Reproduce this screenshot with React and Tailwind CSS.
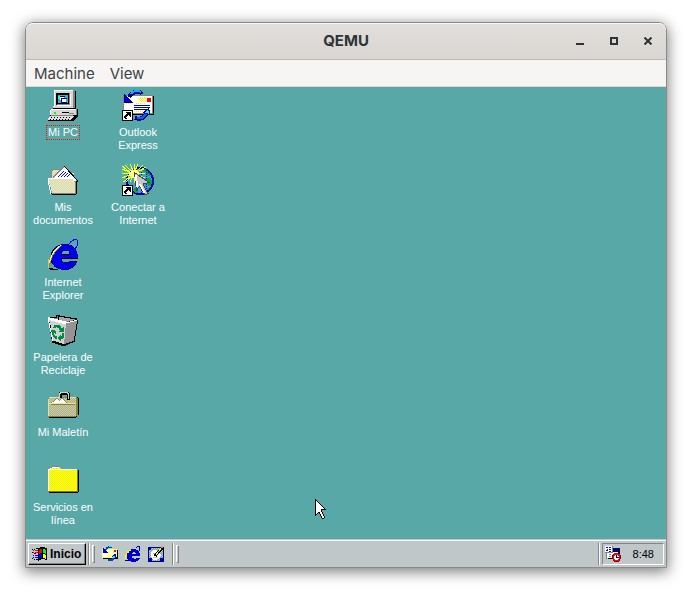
import { useState } from 'react';

const Icon = ({ size = 32, children }) => (
  <svg
    width={size}
    height={size}
    viewBox={size === 16 ? '0 0 16 16' : '0 0 32 32'}
    shapeRendering="crispEdges"
    className="shrink-0"
    aria-hidden="true"
  >
    {children}
  </svg>
);

const Dithers = () => (
  <svg width="0" height="0" className="absolute" aria-hidden="true">
    <defs>
      <pattern id="dither-yellow" width="2" height="2" patternUnits="userSpaceOnUse">
        <path fill="#ffff00" d="M0 0h2v2H0z" />
        <path fill="#eeee20" d="M1 0h1v1H1zM0 1h1v1H0z" />
      </pattern>
      <pattern id="dither-pale" width="2" height="2" patternUnits="userSpaceOnUse">
        <path fill="#d6d6d6" d="M0 0h2v2H0z" />
        <path fill="#ecec9c" d="M1 0h1v1H1zM0 1h1v1H0z" />
      </pattern>
      <pattern id="dither-olive" width="2" height="2" patternUnits="userSpaceOnUse">
        <path fill="#c6c6c6" d="M0 0h2v2H0z" />
        <path fill="#b5b56a" d="M1 0h1v1H1zM0 1h1v1H0z" />
      </pattern>
      <pattern id="dither-blue" width="2" height="2" patternUnits="userSpaceOnUse">
        <path fill="#c6c6c6" d="M0 0h2v2H0z" />
        <path fill="#58a8a8" d="M1 0h1v1H1zM0 1h1v1H0z" />
      </pattern>
    </defs>
  </svg>
);

const ShortcutArrow = () => (
  <g>
    <path fill="#000" d="M0 21h11v11H0z" />
    <path fill="#fff" d="M1 22h9v9H1z" />
    <path fill="#000" d="M4 23h5v5H8v-1H7v-1H6v1H5v1H4v2H3v-1H2v-2h1v-1h1v-1h1v-1H4zM3 29h2v1H3z" />
  </g>
);

const ComputerIcon = () => (
  <Icon>
    <path fill="#000" d="M8 1h20v1h1v18h2v8h-1v1h-1v1h-1v1h-1v1H1v-1h1v-2h1v-9h3v-2h2V2h1z" />
    <path fill="#848484" d="M7 1h21v18H7zM3 20h27v6H3z" />
    <path fill="#d6d6d6" d="M7 2h19v17H6v-2h1zM3 21h26v5H3z" />
    <path fill="#fff" d="M7 1h19v1H8v16H7zM4 20h25v1H4zM3 21h1v5H3z" />
    <path fill="#848484" d="M9 4h14v12H9z" />
    <path fill="#000" d="M9 4h13v1H10v11H9z" />
    <path fill="#fff" d="M10 16h13V5h1v12H10z" />
    <path fill="#000" d="M10 5h12v10H10z" />
    <path fill="#58a8a8" d="M11 6h10v8H11z" />
    <path fill="#00ffff" d="M11 7h2v3h-2z" />
    <path fill="#fff" d="M13 8h4v3h-4zM15 10h4v3h-4z" />
    <path fill="#0000c6" d="M13 7h5v1h-5zM15 9h5v1h-5zM14 9h1v5h-1zM15 13h5v1h-5z" />
    <path fill="#00ff00" d="M7 23h2v2H7z" />
    <path fill="#000" d="M15 23h7v1h-7zM26 26h4v1h-4z" />
    <path fill="#848484" d="M22 24h5v1h-5zM4 26h22v1H4z" />
    <path fill="#e0e0e0" d="M3 27h24v1h-1v1h-1v1h-1v1H1v-2h1v-1h1z" />
    <path stroke="#000" strokeDasharray="1 2" d="M4 28.500h21M3 30.500h20" />
  </Icon>
);

const DocumentsIcon = () => (
  <Icon>
    <path fill="url(#dither-pale)" d="M5 6h1V5h6v1h1v3h14v6H4V8h1z" />
    <path fill="#848484" d="M6 5h6v1H6zM5 6h1v1H5zM4 7h1v7H4z" />
    <path fill="#fff" stroke="#848484" d="M17 2.500L6.500 13v3h21v2l3-1z" />
    <path fill="#fff" d="M17 3l13 13-4 2-3-3H8z" />
    <path stroke="#0000ff" d="M11 13l6-6M14 13l5-5M17 13l4-4M20 13l3-3" />
    <path fill="none" stroke="#000" d="M17 2l14 15-3 2" />
    <path fill="#000" d="M29 17h1v13h-1v1H5v-1H4v-1h25z" />
    <path fill="url(#dither-pale)" d="M2 15h24v3h3v12H5v-3H4v-4H3v-3H2z" />
    <path fill="#fff" d="M1 14h24v1H2v6H1zM2 21h1v5H2zM3 26h1v4H3z" />
    <path fill="#848484" d="M28 18h1v11h-1zM5 29h24v1H5z" />
  </Icon>
);

const ExplorerIcon = () => (
  <Icon>
    <path fill="none" stroke="#0000ff" strokeWidth="1" d="M22 5c3-4 6-5 8-4 2 2 1 5-2 9" />
    <path
      fill="#0000f0"
      stroke="#000084"
      fillRule="evenodd"
      d="M30.500 19H14c0 3 2 5 5 5 3 0 4-1 5-2h6c-2 5-6 8.500-12 8.500-8 0-14-4.500-14-12 0-8 6-13 14-13 8 0 12.500 5 12.500 13.500zM14 15h9c0-3-2-4-4-4-3 0-5 1-5 4z"
    />
    <path fill="#000" d="M14 15h9v1h-9zM14 19h17v1H14z" />
    <path fill="#848442" d="M15 6C8 9 2 15 1 29h2c0-9 4-16 12-22z" />
    <path fill="#ffff42" d="M14 6C8 9 3 15 2 24h1c1-7 5-13 11-17z" />
    <path fill="#c6c68c" d="M1 20h1v9H1z" />
    <path fill="#000" d="M2 29h4v1h5v1H3v-1H2z" />
  </Icon>
);

const RecycleIcon = () => (
  <Icon>
    <path fill="#000" d="M1 3h8V1h4v1h5v1h6v1h6v2h1v4h-1v6h-1v6h-1v6h-2v1h-3v1h-2v1h-2v1h-5v-1h-3v-1H8v-1H5v-4H4v-6H3v-6H2V8H1z" />
    <path fill="#d0d0d0" d="M2 5h2v1h3v1h4v1h4v1h4l-1 21h-3v-1h-3v-1H9v-1H6v-4H5v-6H4v-6H3V8H2z" />
    <path fill="#949494" d="M19 9h4V8h4V7h3v3h-1v6h-1v6h-1v5h-2v1h-3v1h-3v1h-2z" />
    <path fill="#848484" d="M4 4h6V2h2v1h5v1h6v1h5v1h-2v1h-4v1h-6V7h-4V6H8V5H4z" />
    <path fill="#a5a5a5" d="M12 3h5v1h6v1h4v1h-3v1h-4v1h-8z" />
    <path fill="#000" d="M11 1h1v6h-1z" />
    <path fill="#fff" d="M1 3h2v1h4v1h4v1h4v1h4v1h4V7h4V6h3v1h-3v1h-4v1h-4v1h-4V9h-4V8H8V7H4V6H2v3H1z" />
    <path stroke="#fff" d="M2 9l4 18" />
    <path fill="#008c42" d="M7 11h6v1h1v2h2v-1h1v5h-5v-1h1v-1h-1v-2h-2v-1H9v1H6v-1h1z" />
    <path fill="#008c42" d="M4 16h4v1h1v3H8v-1H7v2h1v1h2v3H8v-1H7v-1H6v-2H5v-3H4z" />
    <path fill="#008c42" d="M15 19h2v5h-1v1h-2v2h-1v-1h-1v-1h-1v-2h1v-1h1v-1h1v1h1z" />
  </Icon>
);

const BriefcaseIcon = () => (
  <Icon>
    <path fill="#000" d="M22 8h9v1h1v17h-1v1h-1v1h-1v1H2v-1H1v-1h30z" />
    <path fill="#848442" d="M2 8h28v1h1v17h-1v1h-1v1H1V9h1z" />
    <path fill="url(#dither-olive)" d="M2 9h27v18H2z" />
    <path fill="#e0e0a0" d="M2 8h10v1H2zM1 10h1v17H1zM21 8h8v1h-8z" />
    <path fill="#848442" d="M29 10h1v16h-1zM2 27h27v1H2z" />
    <path fill="none" stroke="#000" strokeWidth="3" d="M13 9V5l1-1h6l1 1v6" />
    <path fill="none" stroke="#d6d6b5" d="M12.500 9V4.500l2-1h5l2 1V10" />
    <path fill="#848484" d="M6 12h1v-1h1v-1h1V9h2v1h1v1h1v-1h1V9h2v1h1v1h1v1h1v1h1v1H4v-1h2z" />
    <path fill="#fff" d="M7 12h1v-1h1v-1h2v1h1v1h1v-1h1v-1h2v1h1v1h1v1h1v1H5v-1h2z" />
    <path fill="#e7e784" d="M2 14h27v1H2z" />
    <path fill="#848442" d="M4 15h24v1H4z" />
  </Icon>
);

const FolderIcon = () => (
  <Icon>
    <path fill="#000" d="M31 6h1v22h-1v1H2v-1h29z" />
    <path fill="#848484" d="M5 2h8v1h1v1h1v1h16v23H1V5h2V4h1V3h1z" />
    <path fill="url(#dither-yellow)" d="M5 3h8v1h1v1H3V4h2zM2 6h28v21H2z" />
    <path fill="#fff" d="M5 3h7v1H5zM3 4h1v1H3zM1 5h29v1H2v21H1z" />
    <path fill="#848400" d="M2 27h29v1H2zM30 6h1v21h-1z" />
  </Icon>
);

const OutlookIcon = () => (
  <Icon>
    <path fill="#000" d="M3 7h29v19H3z" />
    <path fill="#848484" d="M1 6h30v19H1z" />
    <path fill="#fff" d="M2 7h28v17H2z" />
    <path stroke="#ffe600" strokeDasharray="1 1" d="M18 8.500h7M17 10.500h7M19 12.500h5M14 14.500h10M12 22.500h10M4 14.500h6M25 18.500h4M16 9.500h8M18 11.500h6" />
    <path fill="#ff0000" d="M25 9h4v4h-4z" />
    <path fill="#0000c6" d="M12 16h16v1H12zM12 18h16v1H12zM12 20h12v1H12z" />
    <path fill="none" stroke="#000084" strokeWidth="4" d="M20 5c-3-4-9-3-13 3" />
    <path fill="none" stroke="#00b5ff" strokeWidth="2" d="M19 3c-3-2-7-2-10 2" />
    <path fill="#0000e0" stroke="#000084" d="M2.500 5.500v8h8z" />
    <path fill="none" stroke="#000084" strokeWidth="4" d="M13 29c6 2 10 0 12-6" />
    <path fill="none" stroke="#0063ff" strokeWidth="2" d="M15 29c5 1 8-1 10-6" />
    <path fill="#00ffff" stroke="#000084" d="M21.500 23.500l5-4 1.500 6z" />
    <ShortcutArrow />
  </Icon>
);

const ConnectIcon = () => (
  <Icon>
    <circle cx="18" cy="17" r="14" fill="#0000a5" />
    <circle cx="18" cy="17" r="12" fill="#429cce" />
    <path fill="#00a542" d="M21 5h3v2h2v2h2v3h-2v-1h-2V8h-3zM24 14h5v2h1v4h-1v2h-3v-2h-2zM12 24h4v5h-3v-2h-1zM25 24h2v2h-2z" />
    <path fill="none" stroke="#0000ff" strokeDasharray="1 1" d="M24.500 6v19M19.500 4v26" />
    <path stroke="#ffff00" d="M12 0v19M0 9h23M3 1l17 17M4 18L21 1M8 0l8 18M16 0L8 18M0 5l23 9M0 14l22-9M0 2l12 9M24 3l-12 7M1 18l11-8" />
    <path stroke="#00ffff" strokeDasharray="1 2" d="M5 0l13 18M0 7l23 6M2 17L19 0" />
    <path fill="#ffff84" d="M9 6h6v2h2v4h-2v2H9v-2H7V8h2z" />
    <path fill="#c6c6c6" stroke="#424242" d="M12.500 8.500L27 18.500l-6 1.500 5 9.500-3 1.500-5-9-3.500 4z" />
    <path stroke="#fff" strokeWidth="2" d="M13.500 11l2 12M18 20l4.500 9" />
    <ShortcutArrow />
  </Icon>
);

const WindowsFlag = () => (
  <Icon size={16}>
    <path fill="#000" d="M6 2h2V1h5v1h2v12h-2v-1H9v1H7v1H6z" />
    <path fill="#000" d="M0 3h1v1H0zM2 3h1v1H2zM4 2h2v1H4zM0 6h1v1H0zM2 7h2v1H2zM0 12h1v1H0zM2 13h1v1H2zM4 13h2v1H4z" />
    <path fill="#ff0000" d="M1 4h1v1H1zM3 4h3v1H3zM1 6h1v1H1zM3 6h3v1H3zM7 4h1V3h2v4H8v1H7z" />
    <path fill="#0000ff" d="M1 9h1v1H1zM3 9h3v1H3zM1 11h1v1H1zM3 11h3v1H3zM7 9h1V8h2v4H8v1H7z" />
    <path fill="#00ff00" d="M11 3h2v1h1v4h-1V7h-2z" />
    <path fill="#ffff00" d="M11 8h2v1h1v4h-1v-1h-2z" />
  </Icon>
);

const SmallOutlook = () => (
  <Icon size={16}>
    <path fill="#000" d="M1 4h15v9H1z" />
    <path fill="#ffff84" d="M0 3h15v9H0z" />
    <path fill="#fff" d="M1 5h5v6H1zM8 5h3v4H8z" />
    <path fill="#ff0000" d="M12 4h2v2h-2z" />
    <path fill="none" stroke="#0042c6" strokeWidth="2" d="M10 2C8 0 5 1 4 4M6 14c3 1 5 0 6-3" />
    <path fill="#0000c6" d="M1 2v5h5zM9 11l4-4 2 5z" />
    <path fill="#00ffff" d="M7 0h3v1H7zM11 10h2v2h-2z" />
  </Icon>
);

const SmallExplorer = () => (
  <Icon size={16}>
    <path fill="none" stroke="#0000ce" d="M11 2c2-2 4-2 4 0 0 1 0 2-1 3" />
    <path
      fill="#0000ce"
      fillRule="evenodd"
      d="M15 10H7c0 2 1 3 3 3 1 0 2-1 2-1h3c-1 2-3 4-6 4-4 0-7-2-7-6s3-7 7-7 6 3 6 7zM7 8h4c0-2-1-2-2-2s-2 0-2 2z"
    />
    <path fill="#ffff00" d="M4 4h2v1H4v2H2v3H1v3H0v-4h1V7h1V5h2z" />
    <path fill="#000084" d="M0 14h5v1H0z" />
  </Icon>
);

const SmallDesktop = () => (
  <Icon size={16}>
    <path fill="#000084" d="M0 1h16v15H0z" />
    <path fill="url(#dither-blue)" d="M1 2h14v13H1z" />
    <path fill="#0000c6" d="M1 12h3v3H1zM12 12h3v3h-3zM1 2h2v2H1z" />
    <path fill="#fff" d="M5 4h4v1h2v1h1v2h1v2h-1v2h-1v1H9v1H5v-1H4v-2H3V6h1V5h1z" />
    <path fill="#c6c6c6" d="M5 7h4v1H5zM5 11h5v1H5z" />
    <path stroke="#000" strokeWidth="3" d="M15 1L7 10" />
    <path stroke="#ffff00" d="M14 1L8 9" />
    <path fill="#ff8484" d="M13 0h2v2h-2z" />
  </Icon>
);

const TaskSchedulerIcon = () => (
  <Icon size={16}>
    <path fill="#000" d="M3 3h12v10H3zM0 0h8v7H0z" />
    <path fill="#fff" d="M2 6h11v6H2zM0 0h7v6H0z" />
    <path fill="#848484" d="M1 6h1v7H1zM7 0h1v6H7zM0 6h8v1H0z" />
    <path fill="#000084" d="M8 2h7v3H8z" />
    <path fill="#0000ff" d="M1 1h2v1H1zM4 1h2v1H4zM2 3h1v1H2zM4 3h2v1H4zM1 4h2v1H1zM4 5h2v1H4z" />
    <path fill="#848484" d="M4 8h2v1H4zM4 10h2v1H4z" />
    <path fill="#840000" d="M9 7h5v1h1v1h1v4h-1v2h-1v1H9v-1H8v-2H7V9h1V8h1z" />
    <path fill="#ff0000" d="M9 7h4v1h2v5h-1v2H9v-1H8V9h1z" />
    <path fill="#fff" d="M10 9h3v1h1v3h-1v1h-3v-1H9v-3h1z" />
    <path fill="#000084" d="M11 9h1v2h2v1h-3z" />
  </Icon>
);

const MousePointer = () => (
  <svg width="12" height="20" viewBox="0 0 12 20" shapeRendering="crispEdges" className="absolute left-[289px] top-[412px]" aria-hidden="true">
    <path fill="#000" d="M0 0h1v1h1v1h1v1h1v1h1v1h1v1h1v1h1v1h1v1h1v1h1v1H7v2h1v2h1v2h1v2H9v1H7v-1H6v-2H5v-2H4v-1H3v1H2v1H1v1H0z" />
    <path fill="#fff" d="M1 2h1v1h1v1h1v1h1v1h1v1h1v1h1v1h1v1H6v3h1v2h1v2h1v2H7v-2H6v-2H5v-2H3v1H2v1H1z" />
  </svg>
);

const shortcutColumns = [
  [
    { label: 'Mi PC', icon: ComputerIcon },
    { label: 'Mis documentos', icon: DocumentsIcon },
    { label: 'Internet Explorer', icon: ExplorerIcon },
    { label: 'Papelera de Reciclaje', icon: RecycleIcon },
    { label: 'Mi Maletín', icon: BriefcaseIcon },
    { label: 'Servicios en línea', icon: FolderIcon },
  ],
  [
    { label: 'Outlook Express', icon: OutlookIcon },
    { label: 'Conectar a Internet', icon: ConnectIcon },
  ],
];

const quickLaunch = [
  { label: 'Outlook Express', icon: SmallOutlook },
  { label: 'Internet Explorer', icon: SmallExplorer },
  { label: 'Mostrar escritorio', icon: SmallDesktop },
];

const DesktopShortcut = ({ label, icon: Picture, selected, onSelect }) => (
  <button type="button" onClick={onSelect} className="flex h-[75px] w-[74px] flex-col items-center pt-0.5">
    <Picture />
    <span
      className={
        selected
          ? 'mt-1 border border-dotted border-[#f01010] px-px text-[11px] leading-[13px] text-white'
          : 'mt-[5px] max-w-[64px] text-[11px] leading-[13px] text-white'
      }
    >
      {label}
    </span>
  </button>
);

const Divider = () => <div className="h-[22px] w-0.5 border-l border-r border-l-[#848484] border-r-white" />;

const Grip = () => (
  <div className="h-[18px] w-[3px] border border-b-[#848484] border-l-white border-r-[#848484] border-t-white" />
);

const TitleBar = () => (
  <header className="grid h-[37px] grid-cols-[1fr_auto_1fr] items-center rounded-t-[7px] border-b border-b-[#bfb8b1] border-t border-t-[#f8f7f6] bg-linear-to-b from-[#e1dedb] to-[#dad6d2] pb-0.5 text-[#2e3436]">
    <h1 className="col-start-2 text-[15px] font-bold leading-5">QEMU</h1>
    <div className="flex justify-end gap-[18px] pr-[10px]">
      <button type="button" aria-label="Minimize" className="flex size-4 items-center justify-center">
        <svg width="8" height="8" viewBox="0 0 8 8" shapeRendering="crispEdges">
          <path fill="#2e3436" d="M0 6h8v2H0z" />
        </svg>
      </button>
      <button type="button" aria-label="Maximize" className="flex size-4 items-center justify-center">
        <svg width="8" height="8" viewBox="0 0 8 8" shapeRendering="crispEdges">
          <path fill="#2e3436" fillRule="evenodd" d="M0 0h8v8H0zM2 2v4h4V2z" />
        </svg>
      </button>
      <button type="button" aria-label="Close" className="flex size-4 items-center justify-center">
        <svg width="8" height="8" viewBox="0 0 8 8">
          <path stroke="#2e3436" strokeWidth="2" d="M0.500 0.500l7 7M7.500 0.500l-7 7" />
        </svg>
      </button>
    </div>
  </header>
);

const MenuBar = () => (
  <nav className="flex h-[27px] items-center gap-[15px] border-b border-b-[#dcd8d4] bg-[#f6f5f4] px-2 pt-0.5 text-[15px] leading-5 text-[#3d4345]">
    <button type="button">Machine</button>
    <button type="button">View</button>
  </nav>
);

const Taskbar = () => (
  <footer className="flex h-[28px] shrink-0 flex-col border-t border-[#c0c7c8] bg-[#c0c7c8]">
    <div className="flex flex-1 items-start gap-0.5 border-t border-white px-0.5 pt-0.5">
      <button
        type="button"
        className="flex h-[22px] w-[58px] items-center gap-0.5 border border-b-black border-l-white border-r-black border-t-white pl-[3px] text-[12px] font-bold text-black shadow-[inset_-1px_-1px_0_#848484]"
      >
        <WindowsFlag />
        Inicio
      </button>
      <Divider />
      <div className="flex h-[22px] items-center">
        <Grip />
        <div className="flex gap-[7px] pl-[7px]">
          {quickLaunch.map(({ label, icon: Picture }) => (
            <button type="button" key={label} aria-label={label}>
              <Picture />
            </button>
          ))}
        </div>
      </div>
      <div className="flex flex-1 items-center gap-0.5 pl-1.5">
        <Divider />
        <Grip />
      </div>
      <Divider />
      <div className="flex h-[22px] w-[62px] items-center justify-between border border-b-white border-l-[#848484] border-r-white border-t-[#848484] pl-0.5 pr-[9px] text-[11px] text-black">
        <TaskSchedulerIcon />
        <time className="pt-px">8:48</time>
      </div>
    </div>
  </footer>
);

export default function App() {
  const [selected, setSelected] = useState('Mi PC');

  return (
    <div className="flex min-h-screen flex-col bg-white px-[25px] pb-7 pt-[22px] font-['Inter','Open_Sans',sans-serif]">
      <Dithers />
      <div className="flex flex-1 flex-col rounded-t-lg border border-[#8b8a89] shadow-[0_3px_14px_1px_rgba(0,0,0,0.5)]">
        <TitleBar />
        <MenuBar />
        <div className="flex flex-1 flex-col bg-[#58a8a8] font-['Liberation_Sans',Arial,sans-serif]">
          <main className="relative flex flex-1">
            {shortcutColumns.map((column, i) => (
              <div key={i} className="w-[75px]">
                {column.map(({ label, icon }) => (
                  <DesktopShortcut
                    key={label}
                    label={label}
                    icon={icon}
                    selected={selected === label}
                    onSelect={() => setSelected(label)}
                  />
                ))}
              </div>
            ))}
            <MousePointer />
          </main>
          <Taskbar />
        </div>
      </div>
    </div>
  );
}
